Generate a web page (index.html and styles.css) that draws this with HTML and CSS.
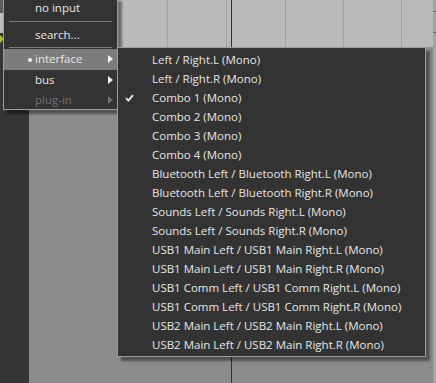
FILE: index.html
```html
<!DOCTYPE html>
<html>
<head>
<meta charset="utf-8">
<link rel="stylesheet" href="styles.css">
</head>
<body>
<div class="app">
  <div class="sidebar">
    <div class="side-top"></div>
    <div class="side-light"></div>
    <div class="side-led"></div>
  </div>
  <div class="main">
    <div class="ruler">
      <span class="grid g1"></span>
      <span class="grid g2"></span>
      <span class="grid g3"></span>
      <span class="grid g4"></span>
      <span class="grid g5"></span>
    </div>
    <div class="lane"></div>
    <span class="playhead"></span>
    <div class="scroll">
      <span class="sb-a"></span>
      <span class="sb-b"></span>
    </div>
  </div>
</div>

<div class="menu menu-main">
  <div class="item">no input</div>
  <div class="sep sep1"></div>
  <div class="item">search...</div>
  <div class="sep sep2"></div>
  <div class="item active"><span class="dot"></span>interface<span class="arrow"></span></div>
  <div class="item">bus<span class="arrow"></span></div>
  <div class="item disabled">plug-in<span class="arrow"></span></div>
</div>

<div class="menu menu-sub">
  <div class="sitem">Left / Right.L (Mono)</div>
  <div class="sitem">Left / Right.R (Mono)</div>
  <div class="sitem checked"><svg class="check" width="9" height="8" viewBox="0 0 9 8"><path d="M1 4.2 L3.4 6.6 L8 1.2" fill="none" stroke="#ececec" stroke-width="1.8"/></svg>Combo 1 (Mono)</div>
  <div class="sitem">Combo 2 (Mono)</div>
  <div class="sitem">Combo 3 (Mono)</div>
  <div class="sitem">Combo 4 (Mono)</div>
  <div class="sitem">Bluetooth Left / Bluetooth Right.L (Mono)</div>
  <div class="sitem">Bluetooth Left / Bluetooth Right.R (Mono)</div>
  <div class="sitem">Sounds Left / Sounds Right.L (Mono)</div>
  <div class="sitem">Sounds Left / Sounds Right.R (Mono)</div>
  <div class="sitem">USB1 Main Left / USB1 Main Right.L (Mono)</div>
  <div class="sitem">USB1 Main Left / USB1 Main Right.R (Mono)</div>
  <div class="sitem">USB1 Comm Left / USB1 Comm Right.L (Mono)</div>
  <div class="sitem">USB1 Comm Left / USB1 Comm Right.R (Mono)</div>
  <div class="sitem">USB2 Main Left / USB2 Main Right.L (Mono)</div>
  <div class="sitem">USB2 Main Left / USB2 Main Right.R (Mono)</div>
</div>
</body>
</html>
```

FILE: styles.css
```css
html, body {
  margin: 0;
  padding: 0;
  width: 436px;
  height: 383px;
  overflow: hidden;
  background: #8b8b8b;
  font-family: "Open Sans", "Noto Sans", "DejaVu Sans", sans-serif;
  font-size: 11.5px;
}

.app {
  display: flex;
  width: 436px;
  height: 383px;
}

.sidebar {
  width: 29px;
  flex: none;
  background: #353535;
  position: relative;
}
.side-top {
  position: absolute;
  left: 0; top: 0;
  width: 3px; height: 13px;
  background: #5c5c5c;
}
.side-light {
  position: absolute;
  left: 0; top: 13px;
  width: 3px; height: 20px;
  background: #bdbdbd;
}
.side-led {
  position: absolute;
  left: 0; top: 35px;
  width: 0; height: 0;
  border-top: 4px solid transparent;
  border-bottom: 4px solid transparent;
  border-left: 4px solid #9bc23a;
}

.main {
  flex: 1;
  display: flex;
  flex-direction: column;
  position: relative;
}
.ruler {
  height: 47px;
  background: #bababa;
  position: relative;
}
.grid {
  position: absolute;
  top: 0;
  bottom: 0;
  width: 1px;
  background: #a2a2a2;
}
.g1 { left: 138px; }
.g2 { left: 197px; }
.g3 { left: 256px; }
.g4 { left: 314px; }
.g5 { left: 372px; }
.lane {
  flex: 1;
  background: #8b8b8b;
}
.playhead {
  position: absolute;
  left: 202px;
  top: 0;
  bottom: 0;
  width: 1px;
  background: #2e2e2e;
}
.scroll {
  position: absolute;
  right: 0;
  top: 0;
  bottom: 0;
  width: 3px;
  background: #a4a4a4;
}
.sb-a, .sb-b {
  position: absolute;
  left: 0; right: 0;
  height: 1px;
  background: #6a6a6a;
}
.sb-a { top: 11px; }
.sb-b { top: 32px; }

/* menus */
.menu {
  position: absolute;
  background: #333333;
  border: 1px solid #9c9c9c;
  color: #e6e6e6;
  box-shadow: 4px 4px 2px rgba(0, 0, 0, 0.4);
  box-sizing: border-box;
}

.menu-main {
  left: 3px;
  top: -3px;
  width: 115px;
  height: 113px;
}
.item {
  height: 20px;
  line-height: 20px;
  padding-left: 31px;
  position: relative;
  white-space: nowrap;
}
.menu-main .item:first-child {
  height: 21px;
  line-height: 20px;
}
.sep {
  height: 1px;
  background: #7c7c7c;
  margin: 2px 5px 3px 5px;
}
.sep2 {
  margin: 2px 5px 1px 5px;
}
.item.active {
  background: #7c7c7c;
  height: 21px;
}
.item.disabled {
  color: #707070;
}
.dot {
  position: absolute;
  left: 24px;
  top: 9px;
  width: 4px;
  height: 4px;
  border-radius: 50%;
  background: #f0f0f0;
}
.arrow {
  position: absolute;
  right: 4px;
  top: 6px;
  width: 0;
  height: 0;
  border-top: 4px solid transparent;
  border-bottom: 4px solid transparent;
  border-left: 5px solid #f2f2f2;
}
.item.disabled .arrow {
  border-left-color: #707070;
}

.menu-sub {
  left: 117px;
  top: 47px;
  width: 309px;
  height: 310px;
  padding-top: 2px;
}
.sitem {
  height: 19px;
  line-height: 19px;
  padding-left: 34px;
  position: relative;
  white-space: nowrap;
}
.check {
  position: absolute;
  left: 7px;
  top: 6px;
}
```
